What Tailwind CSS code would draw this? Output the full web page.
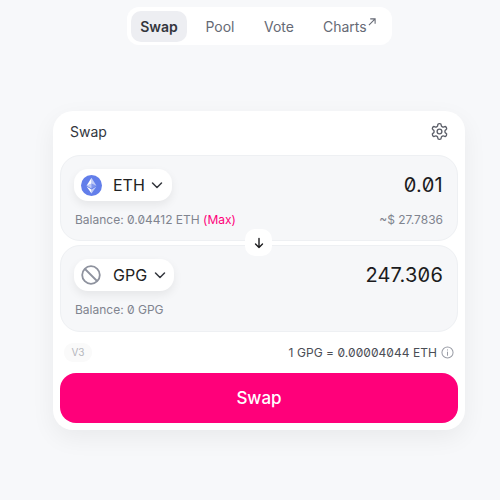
<!DOCTYPE html>
<html lang="en">
<head>
  <meta charset="UTF-8" />
  <title>Swap</title>
  <script src="https://cdn.jsdelivr.net/npm/@tailwindcss/browser@4"></script>
</head>
<body class="bg-[#f7f8fa] h-[500px] w-[500px] overflow-hidden font-['Inter',sans-serif] text-[#1c1c1e]">

  <!-- top nav -->
  <div class="pt-[7px] pl-[127px]">
    <nav class="w-[265px] h-[38px] bg-white rounded-[12px] flex items-center pl-[4px] text-[14px] text-[#666a75]">
      <span class="w-[56px] h-[31px] rounded-[10px] bg-[#edeef2] text-[#33363d] font-semibold flex items-center justify-center">Swap</span>
      <span class="ml-[4px] w-[58px] text-center">Pool</span>
      <span class="ml-[2px] w-[56px] text-center">Vote</span>
      <span class="ml-[16px] flex items-start">Charts<svg class="w-[8px] h-[8px] ml-[1px] mt-[2px]" viewBox="0 0 9 9" fill="none" stroke="#666a75" stroke-width="1.200"><path d="M1 8L8 1M2.500 1H8V6.500"/></svg></span>
    </nav>
  </div>

  <!-- swap card -->
  <div class="mt-[66px] ml-[53px] w-[412px] h-[319px] bg-white rounded-[20px] shadow-[0_8px_24px_rgba(0,0,0,0.06)] px-[7px] relative">
    <div class="h-[44px] pb-[3px] flex items-center justify-between pl-[10px] pr-[9px]">
      <span class="text-[14px] text-[#33363d]">Swap</span>
      <svg class="w-[19px] h-[19px] text-[#5c5f69]" viewBox="0 0 24 24" fill="none" stroke="currentColor" stroke-width="1.700" stroke-linecap="round" stroke-linejoin="round">
        <path d="M12.220 2h-.44a2 2 0 0 0-2 2v.18a2 2 0 0 1-1 1.730l-.43.25a2 2 0 0 1-2 0l-.15-.08a2 2 0 0 0-2.730.73l-.22.38a2 2 0 0 0 .73 2.730l.15.1a2 2 0 0 1 1 1.720v.51a2 2 0 0 1-1 1.740l-.15.09a2 2 0 0 0-.73 2.730l.22.38a2 2 0 0 0 2.730.73l.15-.08a2 2 0 0 1 2 0l.43.25a2 2 0 0 1 1 1.730V20a2 2 0 0 0 2 2h.44a2 2 0 0 0 2-2v-.18a2 2 0 0 1 1-1.730l.43-.25a2 2 0 0 1 2 0l.15.08a2 2 0 0 0 2.730-.73l.22-.39a2 2 0 0 0-.73-2.730l-.15-.08a2 2 0 0 1-1-1.740v-.5a2 2 0 0 1 1-1.740l.15-.09a2 2 0 0 0 .73-2.730l-.22-.38a2 2 0 0 0-2.730-.73l-.15.08a2 2 0 0 1-2 0l-.43-.25a2 2 0 0 1-1-1.730V4a2 2 0 0 0-2-2z"/>
        <circle cx="12" cy="12" r="3"/>
      </svg>
    </div>

    <!-- from -->
    <div class="h-[86px] bg-[#f6f7f9] border border-[#eef0f3] rounded-[20px] pl-[13px] pr-[14px] pt-[13px]">
      <div class="flex items-center justify-between">
        <div class="w-[98px] h-[32px] bg-white rounded-[14px] shadow-[0_4px_10px_rgba(0,0,0,0.07)] flex items-center pl-[7px]">
          <svg class="w-[21px] h-[21px]" viewBox="0 0 32 32">
            <circle cx="16" cy="16" r="16" fill="#627eea"/>
            <path d="M16 4v8.900l7.500 3.300z" fill="#fff" fill-opacity=".6"/>
            <path d="M16 4L8.500 16.200l7.500-3.300z" fill="#fff"/>
            <path d="M16 22v6l7.500-10.400z" fill="#fff" fill-opacity=".6"/>
            <path d="M16 28v-6l-7.500-4.400z" fill="#fff"/>
            <path d="M16 20.600l7.500-4.400-7.500-3.300z" fill="#fff" fill-opacity=".2"/>
            <path d="M8.500 16.200l7.500 4.400v-7.700z" fill="#fff" fill-opacity=".6"/>
          </svg>
          <span class="ml-[11px] text-[16px] leading-none text-[#222]">ETH</span>
          <svg class="ml-[5px] w-[14px] h-[14px]" viewBox="0 0 14 14" fill="none" stroke="#33363d" stroke-width="1.500" stroke-linecap="round" stroke-linejoin="round"><path d="M2.500 5l4.500 4.500L11.500 5"/></svg>
        </div>
        <span class="text-[20px] slashed-zero tracking-[0.3px] text-[#1c1c1e]">0.01</span>
      </div>
      <div class="mt-[10px] pl-[1px] flex items-center justify-between text-[12px] text-[#80848f] slashed-zero">
        <span>Balance: 0.04412 ETH <span class="text-[#ff007a]">(Max)</span></span>
        <span>~$ 27.7836</span>
      </div>
    </div>

    <!-- arrow between panels -->
    <div class="absolute left-[192px] top-[118px] w-[27px] h-[27px] bg-white rounded-[10px] flex items-center justify-center">
      <svg class="w-[12px] h-[12px]" viewBox="0 0 12 12" fill="none" stroke="#1c1c1e" stroke-width="1.400" stroke-linecap="round" stroke-linejoin="round"><path d="M6 1.500v9M2.500 7L6 10.500 9.500 7"/></svg>
    </div>

    <!-- to -->
    <div class="mt-[4px] h-[87px] bg-[#f6f7f9] border border-[#eef0f3] rounded-[20px] pl-[13px] pr-[14px] pt-[13px]">
      <div class="flex items-center justify-between">
        <div class="w-[100px] h-[32px] bg-white rounded-[14px] shadow-[0_4px_10px_rgba(0,0,0,0.07)] flex items-center pl-[7px]">
          <svg class="w-[20px] h-[20px]" viewBox="0 0 20 20" fill="none" stroke="#8e929e" stroke-width="1.800"><circle cx="10" cy="10" r="8.800"/><path d="M4 4l12 12"/></svg>
          <span class="ml-[12px] text-[16px] leading-none text-[#222]">GPG</span>
          <svg class="ml-[6px] w-[14px] h-[14px]" viewBox="0 0 14 14" fill="none" stroke="#33363d" stroke-width="1.500" stroke-linecap="round" stroke-linejoin="round"><path d="M2.500 5l4.500 4.500L11.500 5"/></svg>
        </div>
        <span class="text-[20px] slashed-zero tracking-[0.2px] text-[#1c1c1e]">247.306</span>
      </div>
      <div class="mt-[10px] pl-[1px] text-[12px] text-[#80848f] slashed-zero">Balance: 0 GPG</div>
    </div>

    <!-- rate row -->
    <div class="h-[41px] flex items-center justify-between pl-[4px] pr-[4px]">
      <span class="w-[28px] h-[19px] rounded-[9px] bg-[#fafafa] text-[10px] text-[#b5b7bd] flex items-center justify-center">V3</span>
      <div class="flex items-center gap-[4px] text-[12px] tracking-[0.05px] text-[#4a4d55] slashed-zero">
        <span>1 GPG = 0.00004044 ETH</span>
        <svg class="w-[13px] h-[13px]" viewBox="0 0 14 14" fill="none" stroke="#9a9da6" stroke-width="1.100" stroke-linecap="round"><circle cx="7" cy="7" r="6"/><path d="M7 6.500v3.500M7 4.100v.1"/></svg>
      </div>
    </div>

    <button class="w-[398px] h-[50px] pt-[2px] bg-[#ff007a] rounded-[16px] text-white text-[17px] font-medium">Swap</button>
  </div>

</body>
</html>
